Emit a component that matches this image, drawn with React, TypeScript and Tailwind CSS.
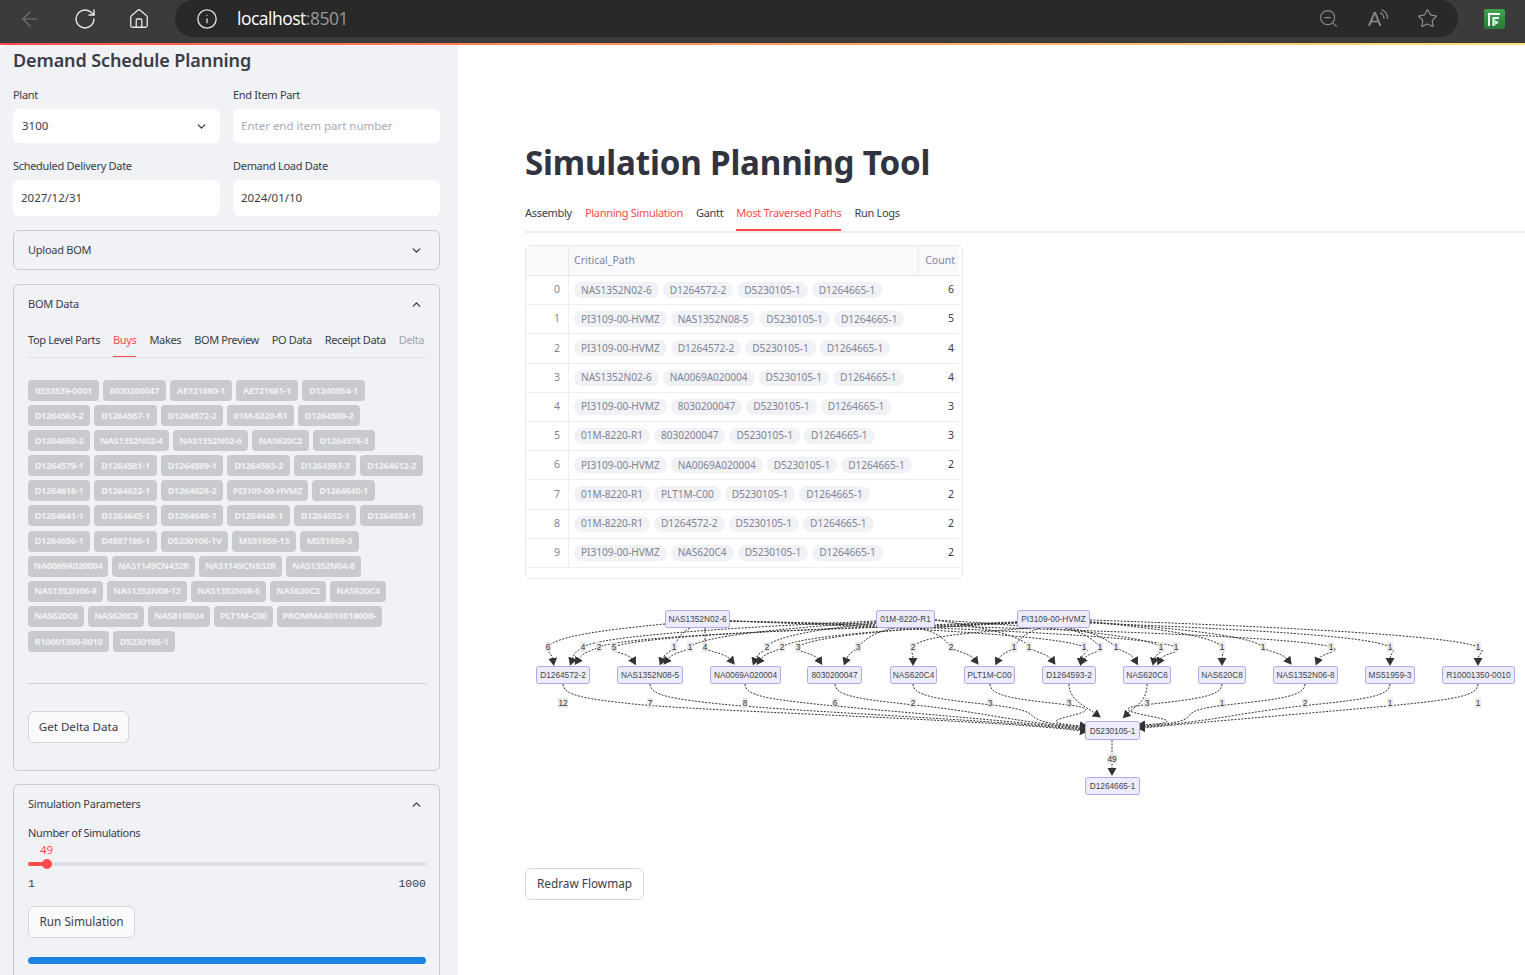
import React from "react";
import { ArrowLeft, ChevronDown, ChevronUp, House, Info, RotateCw, Star, ZoomOut } from "lucide-react";

const bomChips: [string, number][][] = [
  [["0533539-0001", 71], ["8030200047", 63], ["AE721680-1", 62], ["AE721681-1", 62], ["D1240054-1", 63]],
  [["D1264563-2", 62], ["D1264567-1", 63], ["D1264572-2", 62], ["01M-8220-R1", 67], ["D1264580-2", 62]],
  [["D1264650-2", 62], ["NAS1352N02-4", 75], ["NAS1352N02-6", 75], ["NAS620C2", 57], ["D1264578-3", 62]],
  [["D1264579-1", 62], ["D1264581-1", 63], ["D1264589-1", 62], ["D1264593-2", 63], ["D1264593-3", 62], ["D1264612-2", 63]],
  [["D1264618-1", 62], ["D1264622-1", 63], ["D1264628-2", 62], ["PI3109-00-HVMZ", 81], ["D1264640-1", 63]],
  [["D1264641-1", 62], ["D1264645-1", 63], ["D1264646-1", 62], ["D1264648-1", 63], ["D1264652-1", 62], ["D1264654-1", 63]],
  [["D1264656-1", 62], ["D4887186-1", 63], ["D5230106-1V", 67], ["MS51959-13", 64], ["MS51959-3", 59]],
  [["NA0069A020004", 80], ["NAS1149CN432R", 83], ["NAS1149CN832R", 83], ["NAS1352N04-8", 75]],
  [["NAS1352N06-8", 75], ["NAS1352N08-12", 80], ["NAS1352N08-5", 75], ["NAS620C2", 56], ["NAS620C4", 56]],
  [["NAS620C6", 56], ["NAS620C8", 56], ["NAS8100U4", 62], ["PLT1M-C00", 59], ["PROMMA801001800B-", 105]],
  [["R10001350-0010", 81], ["D5230105-1", 62]],
];

const paths: [string[], number][] = [
  [["NAS1352N02-6", "D1264572-2", "D5230105-1", "D1264665-1"], 6],
  [["PI3109-00-HVMZ", "NAS1352N08-5", "D5230105-1", "D1264665-1"], 5],
  [["PI3109-00-HVMZ", "D1264572-2", "D5230105-1", "D1264665-1"], 4],
  [["NAS1352N02-6", "NA0069A020004", "D5230105-1", "D1264665-1"], 4],
  [["PI3109-00-HVMZ", "8030200047", "D5230105-1", "D1264665-1"], 3],
  [["01M-8220-R1", "8030200047", "D5230105-1", "D1264665-1"], 3],
  [["PI3109-00-HVMZ", "NA0069A020004", "D5230105-1", "D1264665-1"], 2],
  [["01M-8220-R1", "PLT1M-C00", "D5230105-1", "D1264665-1"], 2],
  [["01M-8220-R1", "D1264572-2", "D5230105-1", "D1264665-1"], 2],
  [["PI3109-00-HVMZ", "NAS620C4", "D5230105-1", "D1264665-1"], 2],
];

// x, y, width, height
const nodes: [string, number, number, number, number][] = [
  ["NAS1352N02-6", 665, 610, 65, 18],
  ["01M-8220-R1", 876, 610, 59, 18],
  ["PI3109-00-HVMZ", 1017, 610, 73, 18],
  ["D1264572-2", 536, 666, 54, 18],
  ["NAS1352N08-5", 617, 666, 66, 18],
  ["NA0069A020004", 710, 666, 71, 18],
  ["8030200047", 807, 666, 55, 18],
  ["NAS620C4", 890, 666, 47, 18],
  ["PLT1M-C00", 964, 666, 51, 18],
  ["D1264593-2", 1042, 666, 54, 18],
  ["NAS620C6", 1123, 666, 48, 18],
  ["NAS620C8", 1198, 666, 48, 18],
  ["NAS1352N06-8", 1273, 666, 65, 18],
  ["MS51959-3", 1365, 666, 50, 18],
  ["R10001350-0010", 1442, 666, 73, 18],
  ["D5230105-1", 1085, 721, 55, 19],
  ["D1264665-1", 1085, 777, 55, 18],
];

// source x, source y, label x, target x, label
const upperEdges: [number, number, number, number, string][] = [
  [665, 624, 548, 553, "6"],
  [876, 621, 583, 572, "4"],
  [1017, 623, 599, 578, "2"],
  [1017, 622, 614, 633, "5"],
  [690, 628, 674, 662, "1"],
  [876, 622, 690, 667, "1"],
  [705, 628, 705, 731, "4"],
  [876, 623, 767, 755, "2"],
  [1017, 623, 782, 760, "2"],
  [1017, 622, 798, 819, "3"],
  [893, 628, 858, 846, "3"],
  [1030, 628, 913, 913, "2"],
  [920, 628, 951, 975, "2"],
  [1040, 628, 1014, 998, "1"],
  [935, 620, 1029, 1052, "1"],
  [730, 621, 1084, 1081, "1"],
  [1065, 628, 1100, 1083, "1"],
  [1070, 628, 1116, 1135, "1"],
  [935, 620, 1161, 1154, "1"],
  [730, 621, 1176, 1160, "1"],
  [1090, 622, 1222, 1222, "1"],
  [1090, 622, 1263, 1288, "1"],
  [730, 621, 1331, 1318, "1"],
  [1090, 623, 1390, 1390, "1"],
  [1090, 620, 1478, 1478, "1"],
];

// node centre x, end x, end y, label
const lowerEdges: [number, number, number, string][] = [
  [563, 1082, 731, "12"],
  [650, 1082, 730, "7"],
  [745, 1082, 729, "8"],
  [835, 1082, 728, "6"],
  [913, 1082, 727, "2"],
  [990, 1082, 726, "3"],
  [1222, 1143, 725, "1"],
  [1305, 1143, 726, "2"],
  [1390, 1143, 727, "1"],
  [1478, 1143, 728, "1"],
];

function upperPath(sx: number, sy: number, lx: number, tx: number) {
  const dx = lx - sx;
  const k = Math.abs(dx) > 60 ? 0.06 : 0.3;
  const c2x = lx - dx * k;
  const nx = lx + (lx - c2x) * 0.4;
  const tcx = tx - (tx - lx) * 0.25;
  return `M${sx} ${sy} C${sx + dx * 0.5} ${sy + (647 - sy) * 0.25} ${c2x} 636 ${lx} 647 C${nx} 652 ${tcx} 652 ${tx} 660`;
}

function lowerPath(x: number, ex: number, ey: number) {
  const toRight = ex > x;
  const s = toRight ? 1 : -1;
  return `M${x} 684 C${x} 696 ${x + s * 25} 699 ${x + s * 70} 704 C${x + s * 150} 712 ${ex - s * 80} 720 ${ex} ${ey}`;
}

function Flowmap() {
  return (
    <svg width="1000" height="210" viewBox="525 600 1000 210" className="block font-['Liberation_Sans',sans-serif]">
      <defs>
        <marker id="arrow" markerWidth="10" markerHeight="10" refX="2" refY="5" orient="auto" markerUnits="userSpaceOnUse">
          <path d="M0 0.5 L8 5 L0 9.5 Z" fill="#333" />
        </marker>
      </defs>
      <g fill="none" stroke="#333" strokeWidth="1" strokeDasharray="2 1.4">
        {upperEdges.map(([sx, sy, lx, tx], i) => (
          <path key={i} d={upperPath(sx, sy, lx, tx)} markerEnd="url(#arrow)" />
        ))}
        {lowerEdges.map(([x, ex, ey], i) => (
          <path key={i} d={lowerPath(x, ex, ey)} markerEnd="url(#arrow)" />
        ))}
        <path d="M1069 684 C1069 700 1085 706 1096 714" markerEnd="url(#arrow)" />
        <path d="M1147 684 C1147 702 1135 706 1127 714" markerEnd="url(#arrow)" />
        <path d="M1112 740 L1112 770" markerEnd="url(#arrow)" />
      </g>
      {upperEdges.map(([, , lx, , t], i) => (
        <g key={i}>
          <rect x={lx - 3} y={642} width={6} height={10} fill="#e8e8e8" fillOpacity="0.9" />
          <text x={lx} y={650} textAnchor="middle" fontSize="8.3" fill="#333">{t}</text>
        </g>
      ))}
      {lowerEdges.map(([x, , , t], i) => (
        <g key={i}>
          <rect x={x - (t.length > 1 ? 5 : 3)} y={698} width={t.length > 1 ? 10 : 6} height={10} fill="#e8e8e8" fillOpacity="0.9" />
          <text x={x} y={706} textAnchor="middle" fontSize="8.3" fill="#333">{t}</text>
        </g>
      ))}
      {[[1069, 703, "3"], [1147, 703, "3"], [1112, 759, "49"]].map(([x, y, t], i) => (
        <g key={i}>
          <rect x={(x as number) - (t === "49" ? 5 : 3)} y={(y as number) - 5} width={t === "49" ? 10 : 6} height={10} fill="#e8e8e8" fillOpacity="0.9" />
          <text x={x as number} y={(y as number) + 3} textAnchor="middle" fontSize="8.3" fill="#333">{t}</text>
        </g>
      ))}
      {nodes.map(([name, x, y, w, h]) => (
        <g key={name}>
          <rect x={x + 0.5} y={y + 0.5} width={w - 1} height={h - 1} rx="2" fill="#ececff" stroke="#b9a5e6" />
          <text x={x + w / 2} y={y + h / 2 + 3} textAnchor="middle" fontSize="8.3" fill="#444">{name}</text>
        </g>
      ))}
    </svg>
  );
}

function ReadAloudIcon() {
  return (
    <svg width="20" height="24" viewBox="0 0 20 24" fill="none" stroke="#8a8a8a" strokeWidth="1.2" className="font-['Liberation_Sans',sans-serif]">
      <text x="0" y="19" fontSize="20" fill="#8a8a8a" stroke="none">A</text>
      <path d="M12 5.5 C14.5 6.5 16 9 16 12" />
      <path d="M13.5 2.5 C17 4 19.5 7.5 19.5 12" />
    </svg>
  );
}

function Expander({ title, open, children, className }: { title: string; open: boolean; children?: React.ReactNode; className?: string }) {
  return (
    <div className={`rounded-md border border-[#c9cbd1] px-[14px] ${className ?? ""}`}>
      <div className="flex h-[38px] items-center justify-between pr-[2px] text-[11px] tracking-[-0.25px] text-[#3a3c47]">
        <span>{title}</span>
        {open ? <ChevronUp className="h-[13px] w-[13px] stroke-[2.5]" /> : <ChevronDown className="h-[13px] w-[13px] stroke-[2.5]" />}
      </div>
      {children}
    </div>
  );
}

function Field({ label, value, placeholder, select, tall }: { label: string; value?: string; placeholder?: string; select?: boolean; tall?: boolean }) {
  return (
    <div className="w-[207px]">
      <div className="mb-[6px] h-[16px] text-[11px] leading-[16px] tracking-[-0.3px] text-[#3a3c47]">{label}</div>
      <div className={`flex items-center justify-between rounded-md bg-white pr-[12px] text-[11.5px] ${tall ? "h-[36px]" : "h-[34px]"} ${select ? "pl-[9px]" : "pl-[8px]"} ${placeholder ? "text-[#a9abb3]" : "text-[#3a3c47]"}`}>
        <span>{value ?? placeholder}</span>
        {select && <ChevronDown className="h-[13px] w-[13px] stroke-[2.5]" />}
      </div>
    </div>
  );
}

function Sidebar() {
  return (
    <aside className="h-[930px] w-[458px] shrink-0 overflow-hidden rounded-tl-md bg-[#f0f2f6] pl-[13px] pr-[18px]">
      <h2 className="mt-[1px] h-[28px] text-[18px] font-semibold leading-[28px] tracking-[-0.1px] text-[#3a3c47]">Demand Schedule Planning</h2>
      <div className="mt-[13px] flex gap-[13px]">
        <Field label="Plant" value="3100" select />
        <Field label="End Item Part" placeholder="Enter end item part number" />
      </div>
      <div className="mt-[15px] flex gap-[13px]">
        <Field label="Scheduled Delivery Date" value="2027/12/31" tall />
        <Field label="Demand Load Date" value="2024/01/10" tall />
      </div>
      <Expander title="Upload BOM" open={false} className="mt-[14px] h-[40px]" />
      <Expander title="BOM Data" open className="mt-[14px] h-[487px]">
        <div className="mt-[1px] flex h-[34px] w-[398px] gap-[13px] border-b border-[#dfe1e6] pt-[8px] text-[11px] tracking-[-0.36px] text-[#3a3c47]">
          <span className="whitespace-nowrap">Top Level Parts</span>
          <span className="relative h-[25px] whitespace-nowrap text-[#ff4b4b]">
            Buys
            <span className="absolute bottom-0 left-0 h-[1px] w-full bg-[#ff4b4b]" />
          </span>
          <span>Makes</span>
          <span className="whitespace-nowrap">BOM Preview</span>
          <span className="whitespace-nowrap">PO Data</span>
          <span className="whitespace-nowrap">Receipt Data</span>
          <span className="text-[#a5a7ae]">Delta</span>
        </div>
        <div className="mt-[22px] flex flex-col gap-[4.1px]">
          {bomChips.map((row, i) => (
            <div key={i} className="flex gap-[4px]">
              {row.map(([name, w]) => (
                <span
                  key={name + w}
                  style={{ width: w }}
                  className="flex h-[21px] items-center justify-center whitespace-nowrap rounded-[4px] bg-[#c9cacd] text-[9.2px] font-bold tracking-[-0.3px] text-[#f1f1f3]"
                >
                  {name}
                </span>
              ))}
            </div>
          ))}
        </div>
        <div className="mt-[31px] h-px w-[399px] bg-[#cfd1d6]" />
        <button className="mt-[27px] h-[32px] w-[101px] rounded-md border border-[#d5d6db] bg-[#fafafb] text-[11.6px] text-[#3a3c47]">Get Delta Data</button>
      </Expander>
      <Expander title="Simulation Parameters" open className="mt-[13px] h-[300px]">
        <div className="mt-[2px] text-[11px] leading-[16px] tracking-[-0.35px] text-[#3a3c47]">Number of Simulations</div>
        <div className="ml-[12px] mt-[1px] h-[16px] text-[11.5px] leading-[16px] text-[#ff4b4b]">49</div>
        <div className="relative mt-[4px] h-[4px] w-[398px] rounded-full bg-[#dcdfe8]">
          <div className="h-full w-[19px] rounded-full bg-[#ff4b4b]" />
          <div className="absolute left-[14px] top-[-3px] h-[10px] w-[10px] rounded-full bg-[#ff4b4b]" />
        </div>
        <div className="mt-[10px] flex w-[398px] justify-between font-['Liberation_Mono',monospace] text-[11.5px] leading-[16px] text-[#3a3c47]">
          <span>1</span>
          <span>1000</span>
        </div>
        <button className="mt-[14px] block h-[32px] w-[107px] rounded-md border border-[#d5d6db] bg-[#fafafb] text-[11.8px] text-[#3a3c47]">Run Simulation</button>
        <div className="mt-[19px] h-[7px] w-[398px] rounded-full bg-[#1c83e1]" />
      </Expander>
    </aside>
  );
}

function PathsTable() {
  return (
    <div className="mt-[12px] h-[334px] w-[438px] overflow-hidden rounded-md border border-[#e8e9ee]">
      <div className="flex h-[30px] w-[433px] border-b border-[#e8e9ee] bg-[#f8f9fb] text-[10.5px] text-[#808495]">
        <div className="w-[43px] border-r border-[#e8e9ee]" />
        <div className="flex w-[350px] items-center border-r border-[#e8e9ee] pl-[5px]">Critical_Path</div>
        <div className="flex flex-1 items-center justify-end pr-[4px]">Count</div>
      </div>
      {paths.map(([parts, count], i) => (
        <div key={i} className="flex h-[29.2px] w-[433px] border-b border-[#eeeff3] text-[10.5px]">
          <div className="flex w-[43px] items-center justify-end border-r border-[#eeeff3] pr-[8px] text-[#808495]">{i}</div>
          <div className="flex w-[350px] items-center gap-[4px] pl-[5px]">
            {parts.map((p, j) => (
              <span key={j} className="flex h-[16px] items-center whitespace-nowrap rounded-full bg-[#f0f2f6] px-[7px] text-[10.1px] tracking-[-0.03px] text-[#808495]">{p}</span>
            ))}
          </div>
          <div className="flex flex-1 items-center justify-end pr-[5px] text-[#3a3c47]">{count}</div>
        </div>
      ))}
    </div>
  );
}

export default function App() {
  return (
    <div className="flex h-screen w-full flex-col overflow-hidden bg-white font-['Noto_Sans',sans-serif]">
      <header className="flex h-[43px] shrink-0 items-start bg-[#3b3b3b]">
        <div className="flex h-[37px] items-center">
          <ArrowLeft className="ml-[18px] h-[24px] w-[24px] stroke-[1.2] text-[#757575]" />
          <RotateCw className="ml-[31px] h-[24px] w-[24px] stroke-[1.4] text-[#e6e6e6]" />
          <House className="ml-[31px] h-[22px] w-[22px] stroke-[1.4] text-[#e6e6e6]" />
        </div>
        <div className="ml-[25px] flex h-[37px] w-[1283px] items-center rounded-r-[18px] rounded-l-[18px] bg-[#292929]">
          <Info className="ml-[21px] h-[22px] w-[22px] stroke-[1.4] text-[#e6e6e6]" />
          <span className="ml-[19px] font-['Open_Sans',sans-serif] text-[17.5px] tracking-[-0.5px] text-white">
            localhost<span className="text-[#9a9a9a]">:8501</span>
          </span>
          <div className="ml-auto mr-[20px] flex items-center gap-[29px]">
            <ZoomOut className="h-[21px] w-[21px] stroke-[1.3] text-[#8a8a8a]" />
            <ReadAloudIcon />
            <Star className="h-[21px] w-[21px] stroke-[1.4] text-[#8a8a8a]" />
          </div>
        </div>
        <div className="ml-[26px] mt-[9px] flex h-[20px] w-[21px] items-center justify-center rounded-[2px] bg-gradient-to-b from-[#3fa64d] to-[#2a7a36]">
          <svg width="15" height="15" viewBox="0 0 15 15" fill="none">
            <path d="M2 14 V2 H13" stroke="#fff" strokeWidth="2" />
            <path d="M6.5 14 V6 H12" stroke="#fff" strokeWidth="2" />
            <path d="M8 8 L12 10.5 L8 13 Z" fill="#d8f0d8" />
          </svg>
        </div>
      </header>
      <div className="h-[2px] shrink-0 bg-gradient-to-r from-[#ff4b4b] to-[#ffe27a]" />
      <div className="flex flex-1 overflow-hidden">
        <Sidebar />
        <main className="flex-1 overflow-hidden pl-[67px]">
          <h1 className="mt-[95px] h-[46px] text-[33.2px] font-bold leading-[46px] tracking-[-0.2px] text-[#31333f]">Simulation Planning Tool</h1>
          <div className="mt-[12px] flex h-[35px] gap-[13px] border-b-2 border-[#eeeeee] pt-[7px] text-[11px] tracking-[-0.3px] text-[#3a3c47]">
            <span>Assembly</span>
            <span className="text-[#ff4b4b]">Planning Simulation</span>
            <span>Gantt</span>
            <span className="relative h-[26px] text-[#ff4b4b]">
              Most Traversed Paths
              <span className="absolute bottom-0 left-0 h-[2px] w-full bg-[#ff4b4b]" />
            </span>
            <span>Run Logs</span>
          </div>
          <PathsTable />
          <div className="mt-[21px]">
            <Flowmap />
          </div>
          <button className="mt-[58px] h-[32px] w-[119px] rounded-md border border-[#d5d6db] bg-white text-[11.8px] text-[#3a3c47]">Redraw Flowmap</button>
        </main>
      </div>
    </div>
  );
}
